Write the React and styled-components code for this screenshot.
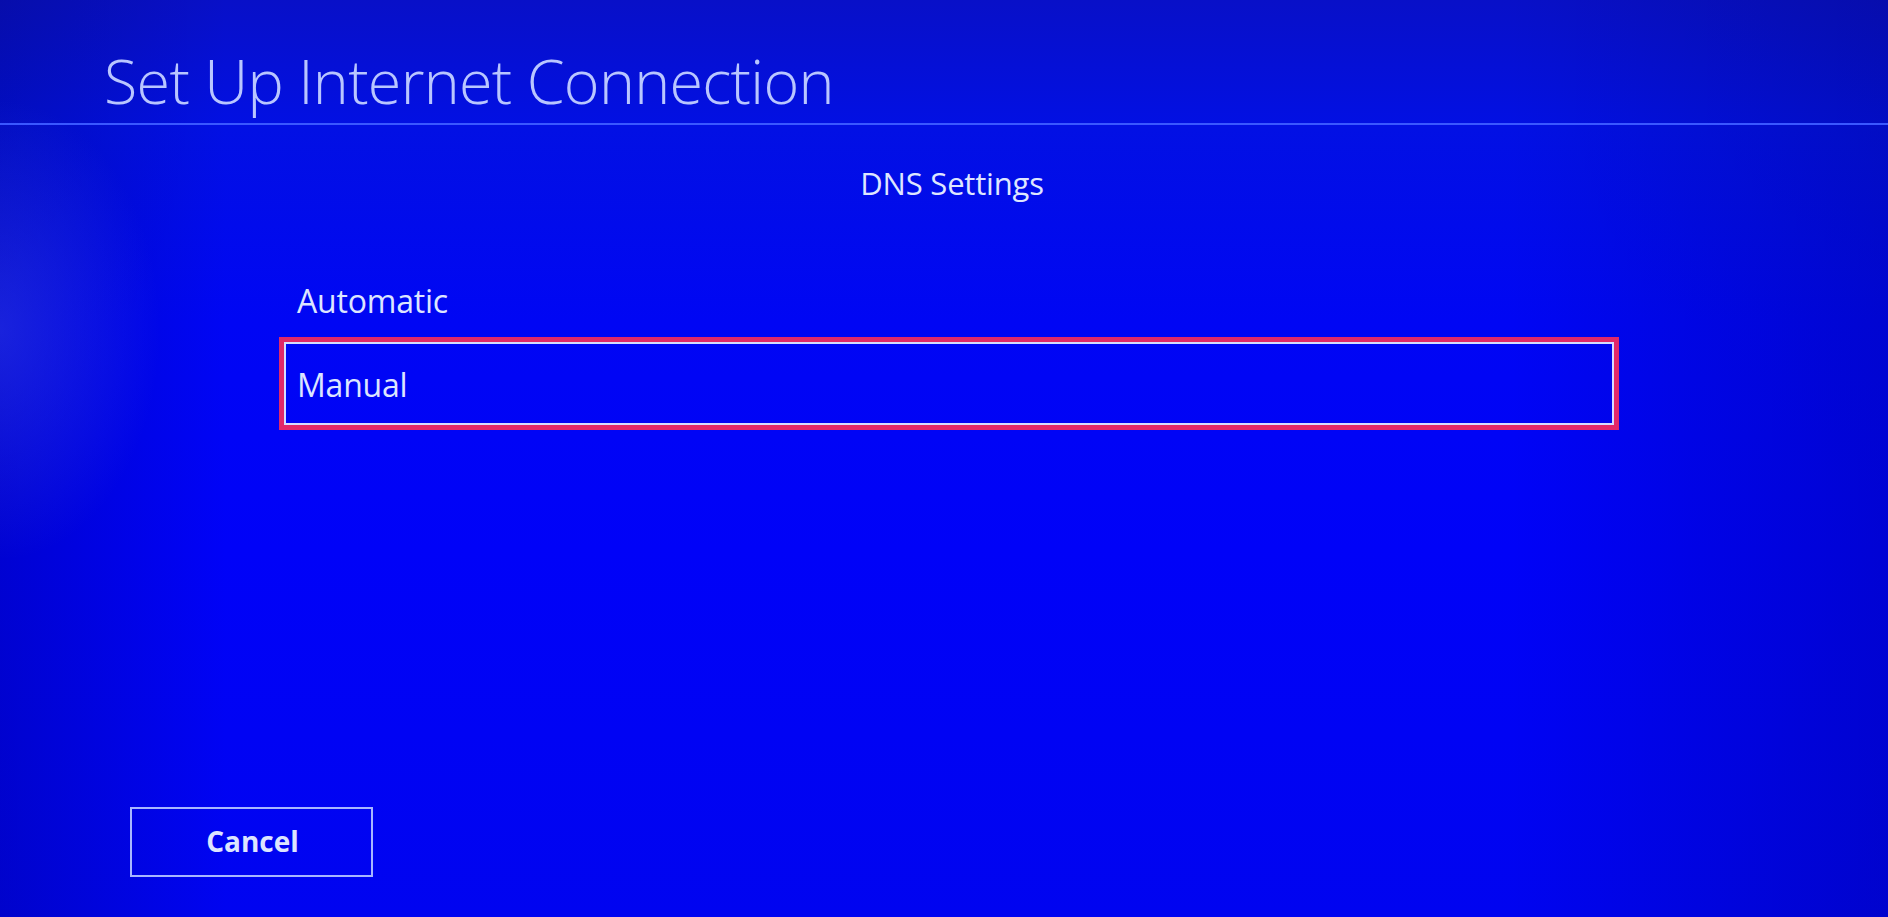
import React from "react";
import styled, { createGlobalStyle } from "styled-components";

const Global = createGlobalStyle`
  html, body { margin: 0; padding: 0; height: 100%; }
  body { background: #0000f2; overflow: hidden; }
  #root { height: 100%; }
`;

const Screen = styled.div`
  position: relative;
  height: 917px;
  width: 1888px;
  display: flex;
  flex-direction: column;
  font-family: "Open Sans", "Noto Sans", sans-serif;
  color: #dfe6ff;
  background:
    radial-gradient(ellipse 160px 230px at 0px 330px, rgba(90, 110, 255, 0.28), rgba(90, 110, 255, 0) 100%),
    linear-gradient(to right, rgba(0, 0, 40, 0.18) 0%, rgba(0,0,0,0) 12%, rgba(0,0,0,0) 80%, rgba(0, 0, 50, 0.18) 100%),
    linear-gradient(to bottom, #0810c8 0%, #0210e4 14%, #0006f4 35%, #0002f8 60%, #0004f0 100%);
`;

const Header = styled.header`
  height: 125px;
  box-sizing: border-box;
  border-bottom: 2px solid #3a58ff;
  padding-left: 104px;
  display: flex;
  align-items: flex-end;
`;

const Title = styled.h1`
  margin: 0 0 12px 0;
  font-weight: 300;
  font-size: 61px;
  line-height: 1;
  letter-spacing: -0.7px;
  color: #b9c6ff;
`;

const Subtitle = styled.h2`
  margin: 38px 0 0 0;
  text-align: center;
  font-weight: 400;
  font-size: 31px;
  line-height: 40px;
  letter-spacing: -0.2px;
  color: #dfe6ff;
  padding-left: 16px;
`;

const List = styled.div`
  margin: 55px 0 0 279px;
  width: 1340px;
  display: flex;
  flex-direction: column;
`;

const Item = styled.div`
  position: relative;
  height: 84px;
  box-sizing: border-box;
  padding-left: 18px;
  display: flex;
  align-items: center;
  font-size: 32px;
  font-weight: 400;
  color: #dde5ff;
  letter-spacing: -0.2px;
  ${(p) =>
    p.$focused &&
    `
    &::after {
      content: "";
      position: absolute;
      left: 0; right: 0; top: -5px; bottom: -4px;
      border: 5px solid #e0286a;
      box-shadow: inset 0 0 0 2px #d6dcff;
      pointer-events: none;
    }
  `}
`;

const Spacer = styled.div`
  flex: 1;
`;

const Footer = styled.footer`
  padding: 0 0 40px 130px;
`;

const Button = styled.button`
  width: 243px;
  height: 70px;
  box-sizing: border-box;
  background: transparent;
  border: 2px solid #a8b6ff;
  color: #dde4ff;
  font-family: "Open Sans", "Noto Sans", sans-serif;
  font-size: 28px;
  font-weight: 700;
  display: flex;
  align-items: center;
  justify-content: center;
  padding: 0 0 2px 2px;
  cursor: pointer;
`;

export default function App() {
  return (
    <>
      <Global />
      <Screen>
        <Header>
          <Title>Set Up Internet Connection</Title>
        </Header>
        <Subtitle>DNS Settings</Subtitle>
        <List>
          <Item>Automatic</Item>
          <Item $focused>Manual</Item>
        </List>
        <Spacer />
        <Footer>
          <Button>Cancel</Button>
        </Footer>
      </Screen>
    </>
  );
}
